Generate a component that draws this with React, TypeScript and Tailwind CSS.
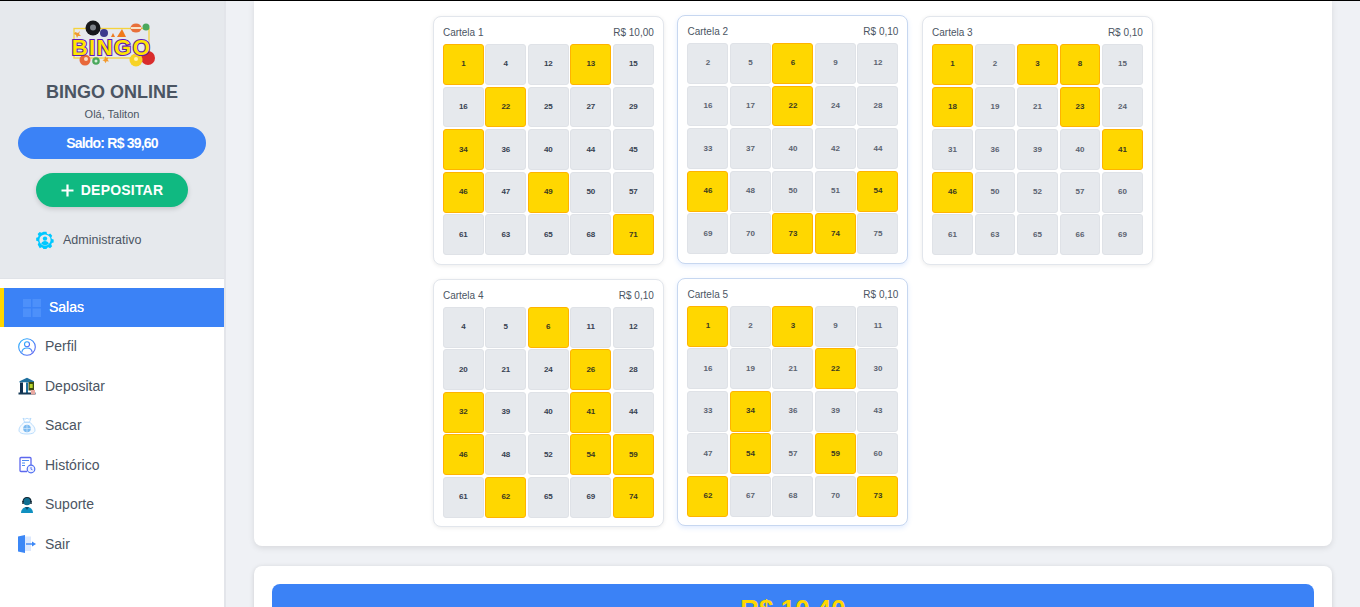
import React from "react";

type C = { name: string; price: string; nums: number[]; marked: number[]; hover?: boolean; soft?: boolean };
const cards: C[] = [
  { name: "Cartela 1", price: "R$ 10,00", nums: [1,4,12,13,15,16,22,25,27,29,34,36,40,44,45,46,47,49,50,57,61,63,65,68,71], marked: [1,13,22,34,46,49,71] },
  { name: "Cartela 2", price: "R$ 0,10", hover: true, soft: true, nums: [2,5,6,9,12,16,17,22,24,28,33,37,40,42,44,46,48,50,51,54,69,70,73,74,75], marked: [6,22,46,54,73,74] },
  { name: "Cartela 3", price: "R$ 0,10", soft: true, nums: [1,2,3,8,15,18,19,21,23,24,31,36,39,40,41,46,50,52,57,60,61,63,65,66,69], marked: [1,3,8,18,23,41,46] },
  { name: "Cartela 4", price: "R$ 0,10", nums: [4,5,6,11,12,20,21,24,26,28,32,39,40,41,44,46,48,52,54,59,61,62,65,69,74], marked: [6,26,32,41,46,54,59,62,74] },
  { name: "Cartela 5", price: "R$ 0,10", hover: true, soft: true, nums: [1,2,3,9,11,16,19,21,22,30,33,34,36,39,43,47,54,57,59,60,62,67,68,70,73], marked: [1,3,22,34,54,59,62,73] },
];

function Logo() {
  return (
    <svg width="88" height="50" viewBox="0 0 88 50" className="block">
      <rect x="6" y="8.500" width="75" height="29.500" fill="none" stroke="#f5d33c" strokeWidth="1.300" />
      <circle cx="25" cy="8" r="7.500" fill="#17181c" />
      <circle cx="25" cy="7.500" r="3" fill="#7d828a" />
      <circle cx="36" cy="13" r="4" fill="#3d3a8c" />
      <path d="M43 17l2-4 2 4zM49 17l5-8 4 8z" fill="#f07a1c" />
      <ellipse cx="68" cy="8" rx="5.500" ry="4.500" fill="#e8703a" />
      <rect x="63" y="7" width="10" height="2" fill="#f7e3c8" />
      <circle cx="78" cy="7" r="3.500" fill="#4aa85c" />
      <path d="M7 12l3 1 2-2-1 3 2 2-3 0-1 2-1-3-2-1z" fill="#f29a2e" />
      <circle cx="17" cy="40" r="5.500" fill="#e8683a" />
      <circle cx="18" cy="39" r="2" fill="#f7d9c2" />
      <circle cx="28" cy="41" r="3.800" fill="#4aa85c" />
      <circle cx="28" cy="41" r="1.500" fill="#d9f0dc" />
      <path d="M37 36l1.500 2 2-.5-1 2 1.500 2-2.500-.3-1 2-1-2-2-1 2-1z" fill="#f29a2e" />
      <circle cx="80" cy="38" r="7" fill="#d92c2c" />
      <circle cx="68" cy="40" r="6.500" fill="#f7d326" />
      <circle cx="68" cy="39" r="2" fill="#fff3b0" />
      <text x="43.500" y="34.500" textAnchor="middle" fontFamily="'Liberation Sans', sans-serif" fontWeight="700" fontSize="22" letterSpacing="1.500" fill="#ffe600" stroke="#5f1cb0" strokeWidth="2.200" paintOrder="stroke">BINGO</text>
    </svg>
  );
}

const AdminIcon = () => (
  <svg width="18" height="18" viewBox="0 0 18 18">
    <path d="M7.300 0h3.400l.5 2.200 1.700.8 2-1 2.200 2.400-1.100 1.900.7 1.800 2 .6v3.200l-2 .6-.7 1.700 1 2-2.300 2.300-1.900-1.100-1.700.7-.5 2.100H7.300l-.6-2.100-1.700-.7-1.900 1.100L.8 14.300l1-2-.7-1.700-2-.6V6.800l2-.6.7-1.800-1.100-1.900L3 .1l2 1 1.700-.8z" transform="translate(1 .8) scale(.89)" fill="#00c8ff" />
    <circle cx="9" cy="9" r="5.600" fill="#e6e9ed" />
    <circle cx="9" cy="7.600" r="2.200" fill="#00c8ff" />
    <path d="M5.200 12.800c.5-2 2-2.800 3.800-2.800s3.300.8 3.800 2.800c-1 .8-2.400 1.200-3.800 1.200s-2.800-.4-3.800-1.200z" fill="#00c8ff" />
  </svg>
);
const GridIcon = () => (
  <svg width="18" height="18" viewBox="0 0 18 18">
    <rect x="0" y="0" width="8" height="8" fill="#4d90fa" /><rect x="9.500" y="0" width="8.500" height="8" fill="#4d90fa" />
    <rect x="0" y="9.500" width="8" height="8.500" fill="#4d90fa" /><rect x="9.500" y="9.500" width="8.500" height="8.500" fill="#4d90fa" />
  </svg>
);
const PerfilIcon = () => (
  <svg width="18" height="18" viewBox="0 0 18 18" fill="none">
    <defs><linearGradient id="pg" x1="0" y1="0" x2="1" y2="1"><stop offset="0" stopColor="#22b5ff" /><stop offset="1" stopColor="#5b5bf0" /></linearGradient></defs>
    <circle cx="9" cy="9" r="8.300" stroke="url(#pg)" strokeWidth="1.100" />
    <circle cx="9" cy="6.300" r="2.500" stroke="url(#pg)" strokeWidth="1.100" />
    <path d="M3.800 14.500c.3-3 2.400-4.500 5.200-4.500s4.900 1.500 5.200 4.500" stroke="url(#pg)" strokeWidth="1.100" />
  </svg>
);
const DepositIcon = () => (
  <svg width="18" height="18" viewBox="0 0 18 18">
    <path d="M1.500 4.200L9 .8l7 3.400v1.300H1.500z" fill="#1f6f9e" />
    <rect x="2" y="5.500" width="14" height="10.500" fill="#fff" />
    <rect x="2" y="5.500" width="3" height="10.500" fill="#0f2f4f" /><rect x="8" y="5.500" width="2" height="10.500" fill="#1f6f9e" />
    <rect x="0.500" y="15.500" width="17" height="2" fill="#173a57" />
    <rect x="10.500" y="5" width="5.500" height="8.500" fill="#3d4d12" /><rect x="11.700" y="7" width="3" height="4" fill="#b6d52c" />
    <rect x="13" y="13" width="4" height="4.500" fill="#e9a8a0" />
  </svg>
);
const SacarIcon = () => (
  <svg width="18" height="18" viewBox="0 0 18 18" fill="none">
    <path d="M5 1.200l2 1 2-1 2 1 2-1-1.500 3.800h-5z" stroke="#a9d4fb" strokeWidth=".8" />
    <path d="M6 5.500C3 8 1 10.500 1 13c0 2.500 2 4 8 4s8-1.500 8-4c0-2.500-2-5-5-7.500z" fill="#f5faff" stroke="#a9d4fb" strokeWidth=".8" />
    <circle cx="9" cy="11.500" r="3.800" fill="#7dbbf0" />
    <path d="M9 7.700v7.600M5.200 11.500h7.600" stroke="#d5eafc" strokeWidth=".7" />
  </svg>
);
const HistIcon = () => (
  <svg width="18" height="18" viewBox="0 0 18 18" fill="none">
    <path d="M13 9V2.500a1 1 0 0 0-1-1H3a1 1 0 0 0-1 1v12a1 1 0 0 0 1 1h6" stroke="#5d68ee" strokeWidth="1.300" />
    <path d="M4 4.500h7M4 7h3" stroke="#4d8af0" strokeWidth="1" />
    <path d="M4 9.500h3" stroke="#4d8af0" strokeWidth="1" />
    <circle cx="13" cy="13" r="3.800" fill="#eef1ff" stroke="#4f6ef0" strokeWidth="1.200" />
    <path d="M13 11v2.200l1.500.6" stroke="#4f6ef0" strokeWidth=".9" />
  </svg>
);
const SupIcon = () => (
  <svg width="18" height="18" viewBox="0 0 18 18">
    <path d="M3 17c0-3.500 2.500-6 6-6s6 2.500 6 6z" fill="#1090c0" />
    <path d="M7 11l2 3 2-3z" fill="#0a4f70" />
    <circle cx="9" cy="5.500" r="3.800" fill="#0f6f92" />
    <path d="M5 6c0-3 1.800-4.500 4-4.500S13 3 13 6" stroke="#0c2230" strokeWidth="1.200" fill="none" />
    <rect x="4.300" y="5" width="1.400" height="3" fill="#0c2230" /><rect x="12.300" y="5" width="1.400" height="3" fill="#0c2230" />
  </svg>
);
const SairIcon = () => (
  <svg width="18" height="18" viewBox="0 0 18 18">
    <rect x="7" y="1.500" width="6" height="14.500" fill="#dbe8fe" />
    <path d="M0 1.500L7 0v18l-7-1.500z" fill="#3b87f6" />
    <path d="M8 9h7" stroke="#3b87f6" strokeWidth="1.400" />
    <path d="M14 6.500L18 9l-4 2.500z" fill="#3b87f6" />
  </svg>
);

const nav = [
  { t: "Perfil", i: <PerfilIcon /> },
  { t: "Depositar", i: <DepositIcon /> },
  { t: "Sacar", i: <SacarIcon /> },
  { t: "Histórico", i: <HistIcon /> },
  { t: "Suporte", i: <SupIcon /> },
  { t: "Sair", i: <SairIcon /> },
];

function Cartela({ c }: { c: C }) {
  return (
    <div className={`h-[248.5px] rounded-lg bg-white border pl-[9px] pr-[9.05px] pt-[5.2px] pb-[9px] ${c.hover ? "-translate-y-px border-[#c7d7f0] shadow-[0_2px_5px_rgba(59,130,246,0.15)]" : "border-[#e2e6ec] shadow-[0_1px_4px_rgba(0,0,0,0.08)]"}`}>
      <div className="flex items-center justify-between h-[20px] mb-[1.8px] text-[10px] text-[#4b5563]">
        <span>{c.name}</span>
        <span>{c.price}</span>
      </div>
      <div className="grid grid-cols-5 gap-x-[1.6px] gap-y-[1.6px]">
        {c.nums.map((n) => {
          const m = c.marked.includes(n);
          return (
            <div key={n} className={`h-[40.95px] rounded-[3px] border flex items-center justify-center text-[8px] font-bold ${m ? "bg-[#ffd700] border-[#ffb300] text-[#3b3a20]" : `bg-[#e6e9ed] border-[#dfe2e7] ${c.soft ? "text-[#5b6370]" : "text-[#374151]"}`}`}>
              {n}
            </div>
          );
        })}
      </div>
    </div>
  );
}

export default function App() {
  return (
    <div className="h-[607px] overflow-hidden border-t border-black bg-[#eff1f5] flex font-['Liberation_Sans',Arial,sans-serif]">
      <aside className="w-[226px] shrink-0 bg-white border-r-2 border-[#e3e5ea] flex flex-col">
        <div className="h-[278px] shrink-0 bg-[#e6e9ed] border-b border-[#e0e3e8] flex flex-col items-center pt-[19px]">
          <Logo />
          <div className="mt-[11px] text-[18px] leading-[22px] font-bold text-[#4b5563]">BINGO ONLINE</div>
          <div className="mt-[4px] text-[11px] leading-[14px] text-[#4b5563]">Olá, Taliton</div>
          <div className="mt-[6px] w-[188px] h-[32px] rounded-full bg-[#3b82f6] text-white text-[14px] tracking-[-0.8px] font-bold flex items-center justify-center">Saldo: R$ 39,60</div>
          <div className="mt-[14px] w-[152px] h-[34px] rounded-full bg-[#10b981] shadow-[0_2px_5px_rgba(0,0,0,0.15)] text-white text-[14px] font-bold tracking-[0.2px] flex items-center justify-center gap-[7px]">
            <svg width="13" height="13" viewBox="0 0 13 13"><path d="M6.500 .5v12M.5 6.500h12" stroke="#fff" strokeWidth="2.200" /></svg>
            DEPOSITAR
          </div>
          <div className="mt-[17px] self-start ml-[36px] flex items-center gap-[9px] h-[32px] text-[12.5px] text-[#4b5563]">
            <AdminIcon />
            Administrativo
          </div>
        </div>
        <nav className="pt-[9px] text-[14px] text-[#4b5563]">
          <div className="h-[39px] bg-[#3b82f6] border-l-4 border-[#ffd700] flex items-center text-white font-medium pl-[19px] gap-[8px]">
            <GridIcon />
            <span className="text-white [text-shadow:0_0_0.4px_#fff]">Salas</span>
          </div>
          {nav.map((n) => (
            <div key={n.t} className="h-[39.5px] flex items-center pl-[18px] gap-[9px]">
              {n.i}
              <span>{n.t}</span>
            </div>
          ))}
        </nav>
      </aside>
      <main className="flex-1 min-w-0 px-[28px]">
        <section className="h-[545px] bg-white rounded-b-lg shadow-[0_2px_6px_rgba(0,0,0,0.1)] pt-[15px] flex justify-center">
          <div className="w-[720.2px] grid grid-cols-[repeat(3,230.95px)] gap-x-[13.63px] gap-y-[14.4px] content-start">
            {cards.map((c) => <Cartela key={c.name} c={c} />)}
          </div>
        </section>
        <section className="mt-[20px] bg-white rounded-lg shadow-[0_1px_5px_rgba(0,0,0,0.15)] p-[18px]">
          <div className="h-[120px] rounded-lg bg-[#3b82f6] pt-[6px] text-center text-[26px] font-bold text-[#ffd700]">R$ 10,40</div>
        </section>
      </main>
    </div>
  );
}
